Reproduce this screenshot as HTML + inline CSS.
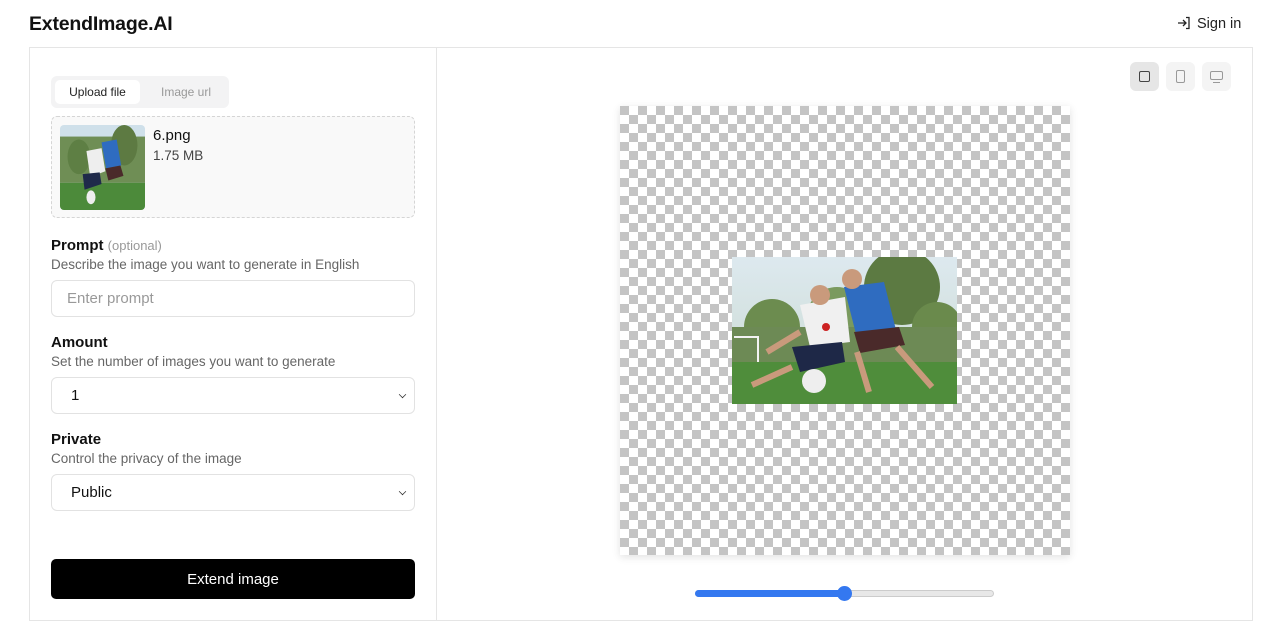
<!DOCTYPE html>
<html><head><meta charset="utf-8"><style>
*{box-sizing:border-box;margin:0;padding:0}
body{width:1280px;height:643px;background:#fff;font-family:"Liberation Sans",sans-serif;position:relative;overflow:hidden;color:#111}
.a{position:absolute}
.logo{left:29px;top:13px;font-size:19.5px;font-weight:bold;letter-spacing:-0.2px}
.sign{left:1177px;top:16px;font-size:14.5px;color:#222}
.box{left:29px;top:47px;width:1224px;height:574px;border:1px solid #e5e5e5}
.div{left:436px;top:47px;width:1px;height:574px;background:#e5e5e5}
.tabs{left:51px;top:76px;width:178px;height:32px;background:#f3f3f4;border-radius:6px}
.tab1{left:55px;top:80px;width:85px;height:24px;background:#fff;border-radius:5px;font-size:12px;text-align:center;line-height:25px;color:#222}
.tab2{left:140px;top:80px;width:92px;height:24px;font-size:12px;text-align:center;line-height:25px;color:#999}
.drop{left:51px;top:116px;width:364px;height:102px;border:1px dashed #d5d5d5;border-radius:6px;background:#f9f9f9}
.lbl{font-size:15px;font-weight:bold;left:51px}
.sub{font-size:13.5px;color:#666;left:51px}
.inp{left:51px;width:364px;height:37px;border:1px solid #e2e2e2;border-radius:6px;background:#fff;font-size:15px;line-height:36px;padding-left:15px}
.chev{position:absolute;right:8px;top:13px;width:7px;height:7px;border-right:1.5px solid #333;border-bottom:1.5px solid #333;transform:rotate(45deg) scale(.75)}
.btn{left:51px;top:559px;width:364px;height:40px;background:#000;border-radius:5px;color:#fff;font-size:15px;text-align:center;line-height:42px}
.ib{top:62px;width:29px;height:29px;border-radius:6px;background:#f4f4f4}
.chk{left:620px;top:106px;width:450px;height:449px;background-color:#fff;background-image:linear-gradient(45deg,#c4c4c4 25%,transparent 25%,transparent 75%,#c4c4c4 75%),linear-gradient(45deg,#c4c4c4 25%,transparent 25%,transparent 75%,#c4c4c4 75%);background-size:18px 18px;background-position:9px 0,0 9px;box-shadow:0 2px 8px rgba(0,0,0,.12)}
</style></head><body>
<div class="a logo">ExtendImage.AI</div>
<div class="a sign"><svg width="14" height="14" viewBox="0 0 14 14" style="vertical-align:-2px;margin-right:6px"><path d="M1 7h8M6 4l3 3-3 3M9 1.5h3v11H9" fill="none" stroke="#222" stroke-width="1.3"/></svg>Sign in</div>
<div class="a box"></div>
<div class="a div"></div>
<div class="a tabs"></div>
<div class="a tab1">Upload file</div>
<div class="a tab2">Image url</div>
<div class="a drop"></div>
<svg class="a" style="left:60px;top:125px;border-radius:4px" width="85" height="85" viewBox="0 0 225 147" preserveAspectRatio="none">
<rect width="225" height="147" fill="#cfe0ea"/><rect y="20" width="225" height="80" fill="#6f8e55"/><circle cx="50" cy="55" r="30" fill="#5e7f44"/><circle cx="170" cy="35" r="35" fill="#5d7a42"/><rect y="100" width="225" height="47" fill="#4c8a3a"/>
<path d="M70 45l40-5 10 40-40 10z" fill="#eee"/><path d="M60 85l45-3 5 20-45 10z" fill="#1f2a4a"/><path d="M110 30l40-5 12 45-40 5z" fill="#2f6cc0"/><path d="M120 75l40-5 8 18-40 8z" fill="#4a2a2a"/><circle cx="82" cy="125" r="12" fill="#eee"/>
</svg>
<div class="a" style="left:153px;top:127px;font-size:15px">6.png</div>
<div class="a" style="left:153px;top:148px;font-size:13.5px;color:#444">1.75 MB</div>
<div class="a lbl" style="top:237px">Prompt <span style="font-weight:normal;font-size:13px;color:#999">(optional)</span></div>
<div class="a sub" style="top:257px">Describe the image you want to generate in English</div>
<div class="a inp" style="top:280px;color:#999">Enter prompt</div>
<div class="a lbl" style="top:334px">Amount</div>
<div class="a sub" style="top:354px">Set the number of images you want to generate</div>
<div class="a inp" style="top:377px;padding-left:19px">1<span class="chev"></span></div>
<div class="a lbl" style="top:431px">Private</div>
<div class="a sub" style="top:451px">Control the privacy of the image</div>
<div class="a inp" style="top:474px;padding-left:19px">Public<span class="chev"></span></div>
<div class="a btn">Extend image</div>
<div class="a ib" style="left:1130px;background:#e6e6e6"><div class="a" style="left:9px;top:9px;width:11px;height:11px;border:1.4px solid #444;border-radius:2px"></div></div>
<div class="a ib" style="left:1166px"><div class="a" style="left:10px;top:8px;width:9px;height:13px;border:1.2px solid #999;border-radius:2px"></div></div>
<div class="a ib" style="left:1202px"><div class="a" style="left:8px;top:9px;width:13px;height:9px;border:1.2px solid #999;border-radius:2px"></div><div class="a" style="left:11px;top:20px;width:7px;height:1.2px;background:#999"></div></div>
<div class="a chk"></div>
<svg class="a" style="left:732px;top:257px" width="225" height="147" viewBox="0 0 225 147">
<defs><linearGradient id="s" x1="0" y1="0" x2="0" y2="1"><stop offset="0" stop-color="#dde9ef"/><stop offset="1" stop-color="#c9d9cf"/></linearGradient></defs>
<rect width="225" height="147" fill="url(#s)"/>
<circle cx="40" cy="70" r="28" fill="#6c8c4f"/><circle cx="105" cy="60" r="30" fill="#7a9a5e"/><circle cx="170" cy="30" r="38" fill="#5c7a42"/><circle cx="205" cy="70" r="25" fill="#6a8a4c"/><rect y="70" width="225" height="36" fill="#6d8a55"/>
<path d="M2 80h24v25M2 80" fill="none" stroke="#f2f2f2" stroke-width="2"/>
<rect y="105" width="225" height="42" fill="#4f8d3b"/>
<path d="M68 48l45-8 5 45-40 5z" fill="#f0f0f0"/><circle cx="94" cy="70" r="4" fill="#c22"/><path d="M60 90l50-5 3 20-45 10z" fill="#1e2847"/>
<path d="M112 30l40-5 12 48-40 4z" fill="#2f6cc0"/><path d="M122 75l45-5 6 18-45 8z" fill="#4a2a2a"/>
<circle cx="88" cy="38" r="10" fill="#c99a7c"/><circle cx="120" cy="22" r="10" fill="#c99a7c"/>
<path d="M125 95l12 40M165 90l35 40M60 110l-40 18M35 95l33-20" stroke="#c99a7c" stroke-width="6" fill="none"/>
<circle cx="82" cy="124" r="12" fill="#eee"/>
</svg>
<div class="a" style="left:695px;top:590px;width:299px;height:7px;border-radius:4px;background:#e8e8e8;border:1px solid #ccc"></div>
<div class="a" style="left:695px;top:590px;width:150px;height:7px;border-radius:4px;background:#3478f0"></div>
<div class="a" style="left:837px;top:586px;width:15px;height:15px;border-radius:50%;background:#3478f0"></div>
</body></html>
